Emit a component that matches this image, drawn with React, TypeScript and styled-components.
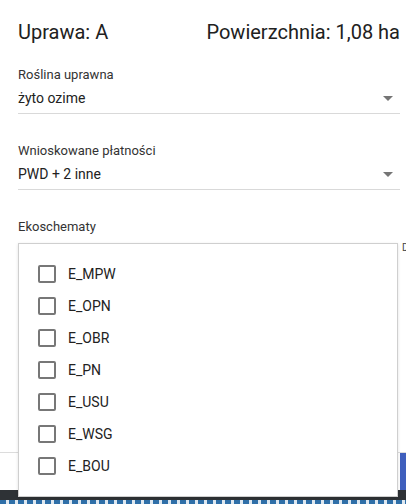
import styled, { createGlobalStyle } from "styled-components";

const GlobalStyle = createGlobalStyle`
  html, body {
    margin: 0;
    padding: 0;
    background: #ffffff;
    font-family: Roboto, "Liberation Sans", Arial, sans-serif;
    color: #212121;
    overflow: hidden;
  }
`;

const Screen = styled.div`
  position: relative;
  width: 406px;
  height: 504px;
  display: flex;
  flex-direction: column;
  overflow: hidden;
`;

const Content = styled.div`
  flex: 1;
  display: flex;
  flex-direction: column;
  padding: 20px 6px 0 18px;
`;

const Header = styled.div`
  display: flex;
  justify-content: space-between;
  align-items: center;
  height: 24px;
  font-size: 20px;
  color: #212121;
  margin-bottom: 23px;
`;

const Field = styled.div<{ $gap?: number }>`
  display: flex;
  flex-direction: column;
  margin-bottom: ${({ $gap }) => $gap ?? 0}px;
`;

const Label = styled.div`
  font-size: 13px;
  line-height: 16px;
  color: #333333;
`;

const SelectRow = styled.div`
  display: flex;
  justify-content: space-between;
  align-items: center;
  height: 30px;
  border-bottom: 1px solid #d9d9d9;
  font-size: 14px;
  color: #222222;
`;

const Arrow = styled.span`
  width: 0;
  height: 0;
  border-left: 5px solid transparent;
  border-right: 5px solid transparent;
  border-top: 5px solid #757575;
  margin-right: 7px;
`;

const SideMark = styled.span`
  position: absolute;
  left: 402px;
  top: 242px;
  font-size: 10px;
  color: #444;
`;

const Footer = styled.div`
  height: 37px;
  border-top: 1px solid #dcdcdc;
  display: flex;
  justify-content: flex-end;
`;

const PrimaryButton = styled.div`
  width: 6px;
  background: #3f5fbd;
`;

const DarkStrip = styled.div`
  height: 10px;
  background: #2e3236;
`;

const DashLine = styled.div`
  height: 4px;
  background: repeating-linear-gradient(90deg, #2f6fa8 0 6px, #dfe8f0 6px 9px);
`;

const Popup = styled.div`
  position: absolute;
  left: 18px;
  top: 243px;
  width: 380px;
  height: 254px;
  background: #ffffff;
  border: 1px solid #cfcfcf;
  box-shadow: 0 1px 3px rgba(0, 0, 0, 0.12);
  display: flex;
  flex-direction: column;
  padding-top: 14px;
  box-sizing: border-box;
`;

const Option = styled.label`
  display: flex;
  align-items: center;
  height: 32px;
  padding-left: 19px;
  font-size: 14px;
  color: #222222;
`;

const Box = styled.span`
  width: 14px;
  height: 14px;
  border: 2px solid #777777;
  border-radius: 2px;
  margin-right: 12px;
`;

const options = ["E_MPW", "E_OPN", "E_OBR", "E_PN", "E_USU", "E_WSG", "E_BOU"];

export default function App() {
  return (
    <>
      <GlobalStyle />
      <Screen>
        <Content>
          <Header>
            <span>Uprawa: A</span>
            <span>Powierzchnia: 1,08 ha</span>
          </Header>
          <Field $gap={29}>
            <Label>Roślina uprawna</Label>
            <SelectRow>
              <span>żyto ozime</span>
              <Arrow />
            </SelectRow>
          </Field>
          <Field $gap={29}>
            <Label>Wnioskowane płatności</Label>
            <SelectRow>
              <span>PWD + 2 inne</span>
              <Arrow />
            </SelectRow>
          </Field>
          <Field>
            <Label>Ekoschematy</Label>
          </Field>
        </Content>
        <Footer>
          <PrimaryButton />
        </Footer>
        <DarkStrip />
        <DashLine />
        <SideMark>D</SideMark>
        <Popup>
          {options.map((o) => (
            <Option key={o}>
              <Box />
              {o}
            </Option>
          ))}
        </Popup>
      </Screen>
    </>
  );
}
